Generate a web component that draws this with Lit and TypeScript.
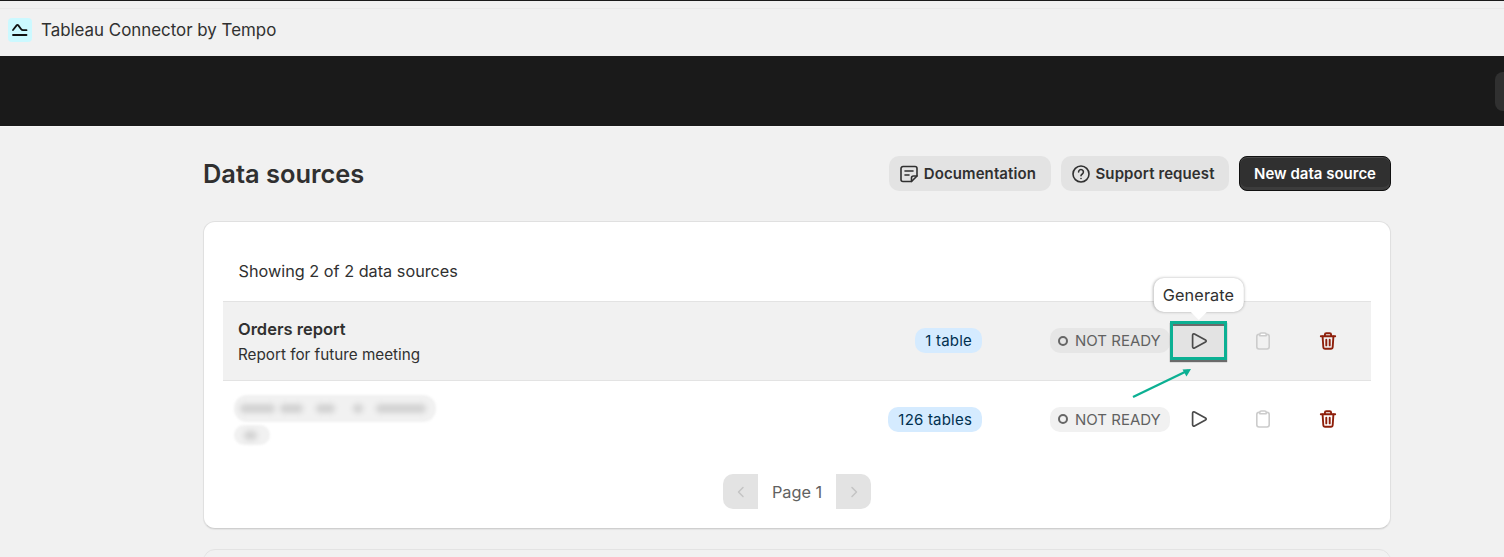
import { LitElement, html, css, svg } from "lit";
import { customElement } from "lit/decorators.js";

const blurBlobs = [
  [35, 5],
  [23, 13],
  [19, 18],
  [10, 13],
  [50, 0],
];

const playIcon = html`<svg width="20" height="20" viewBox="0 0 20 20" fill="none"><path d="M3.6 4.2c0-1 1-1.6 1.9-1.1l11 5.8c.9.5.9 1.7 0 2.2l-11 5.8c-.9.5-1.900-.1-1.900-1.100z" stroke="currentColor" stroke-width="1.7" stroke-linejoin="round"/></svg>`;
const clipIcon = html`<svg width="20" height="20" viewBox="0 0 20 20" fill="none"><rect x="3.800" y="3.400" width="12.400" height="14.600" rx="2.200" stroke="currentColor" stroke-width="1.600"/><path d="M6.800 4.800V3.400c0-.9.700-1.400 1.500-1.400h3.400c.8 0 1.500.5 1.500 1.400v1.400z" fill="#fff" stroke="currentColor" stroke-width="1.500" stroke-linejoin="round"/></svg>`;
const trashIcon = html`<svg width="20" height="20" viewBox="0 0 20 20" fill="none" stroke="currentColor" stroke-width="1.900" stroke-linecap="round" stroke-linejoin="round"><path d="M2.800 5.200h14.400"/><path d="M6.900 5V3.600c0-.8.600-1.400 1.400-1.400h3.400c.8 0 1.400.6 1.400 1.400V5"/><path d="M4.600 5.500l.7 10.500c.1 1 .8 1.800 1.800 1.800h5.800c1 0 1.700-.8 1.800-1.800l.7-10.500"/><path d="M8.300 8.800v5.600M11.700 8.800v5.600"/></svg>`;

@customElement("app-root")
export class AppRoot extends LitElement {
  static styles = css`
    :host {
      display: block;
      height: 557px;
      overflow: hidden;
      background: #f1f1f1;
      font-family: Inter, "Liberation Sans", sans-serif;
      color: #303030;
      position: relative;
    }
    .topbar {
      height: 56px;
      box-sizing: border-box;
      border-top: 1px solid #1a1a1a;
      background: linear-gradient(#f1f1f1 7px, #e9e9e9 7px, #e9e9e9 8px, #f1f1f1 8px);
      display: flex;
      align-items: center;
      gap: 9px;
      padding: 3px 0 0 8px;
    }
    .logo {
      width: 24px;
      height: 24px;
      border-radius: 4px;
      background: #ccf9ff;
      display: flex;
      align-items: center;
      justify-content: center;
    }
    .app-name {
      font-size: 16.900px;
      color: #303030;
    }
    .band {
      height: 71px;
      box-sizing: border-box;
      background: #1a1a1a;
      border-bottom: 1px solid #f7f7f7;
      display: flex;
      align-items: center;
      justify-content: flex-end;
    }
    .band-pill {
      width: 9px;
      height: 39px;
      background: #303030;
      border-radius: 8px 0 0 8px;
    }
    main {
      padding: 29px 113px 0 203px;
    }
    .page-head {
      display: flex;
      align-items: center;
      gap: 10px;
      height: 35px;
      margin-bottom: 30px;
    }
    h1 {
      margin: 0 auto 0 0;
      font-size: 25.400px;
      font-weight: 600;
      color: #303030;
    }
    .btn {
      height: 35px;
      box-sizing: border-box;
      display: flex;
      align-items: center;
      gap: 5px;
      padding: 0 14.500px 0 10px;
      border-radius: 10px;
      background: #e3e3e3;
      font-size: 15px;
      font-weight: 600;
      letter-spacing: 0.1px;
      color: #303030;
    }
    .btn.primary {
      background: #303030;
      color: #fff;
      padding: 0 14px;
      border-radius: 8px;
      border: 1px solid #111;
      letter-spacing: 0;
      box-shadow: inset 0 1px 0 #4a4a4a, inset 0 -3px 0 #3c3c3c;
    }
    .card {
      background: #fff;
      border: 1px solid #e0e0e0;
      border-bottom-color: #cfcfcf;
      border-radius: 12px;
      height: 308px;
      box-sizing: border-box;
      padding: 0 19px;
      box-shadow: 0 1px 1px rgba(0, 0, 0, 0.06);
    }
    .count {
      height: 79px;
      box-sizing: border-box;
      padding: 40px 0 0 15.500px;
      font-size: 16.250px;
      line-height: 18px;
      color: #303030;
    }
    .row {
      box-sizing: border-box;
      display: flex;
      align-items: center;
      padding: 0 15px 1px;
      position: relative;
    }
    .row.active {
      background: #f1f1f1;
      border-top: 1px solid #e3e3e3;
      border-bottom: 1px solid #e3e3e3;
      height: 80px;
    }
    .row.plain {
      height: 78px;
      padding-bottom: 2px;
    }
    .info {
      flex: 1;
      padding-top: 2px;
      font-size: 15.250px;
      line-height: 25px;
    }
    .info strong {
      display: block;
      font-size: 16.500px;
      font-weight: 600;
    }
    .blur {
      display: flex;
      flex-direction: column;
      align-items: flex-start;
      gap: 3px;
      margin: 0 0 0 -4px;
    }
    .blur-line {
      display: flex;
      align-items: center;
      height: 27px;
      width: 202px;
      box-sizing: border-box;
      padding-left: 6px;
      border-radius: 13px;
      background: #f1f1f1;
      filter: blur(1px);
    }
    .blur-line.short {
      width: 36px;
      height: 20px;
      padding-left: 10px;
    }
    .blur-line i {
      display: block;
      height: 9px;
      flex: none;
      border-radius: 5px;
      background: #d2d2d2;
      filter: blur(2.500px);
    }
    .badge {
      font-size: 15px;
      line-height: 25px;
      padding: 0 10px;
      border-radius: 10px;
      background: #d5ebff;
      color: #00304f;
      letter-spacing: 0.2px;
      margin-right: 68px;
    }
    .status {
      display: flex;
      align-items: center;
      gap: 7.500px;
      height: 25px;
      box-sizing: border-box;
      width: 120px;
      padding-left: 7.500px;
      border-radius: 10px;
      background: #e6e6e6;
      color: #616161;
      font-size: 15px;
      white-space: nowrap;
    }
    .row.plain .status {
      background: #f1f1f1;
    }
    .status b {
      width: 10px;
      height: 10px;
      box-sizing: border-box;
      border: 2px solid #666;
      border-radius: 50%;
    }
    .actions {
      display: flex;
      align-items: center;
      gap: 7.500px;
    }
    .action {
      width: 57px;
      height: 39px;
      box-sizing: border-box;
      display: flex;
      align-items: center;
      justify-content: center;
      color: #4a4a4a;
      position: relative;
    }
    .action.current {
      background: #e3e3e3;
      border: 3px solid #0cb093;
      box-shadow: inset 0 2px 0 #6b6b6b, 0 2px 1px #6b6b6b;
    }
    .action.muted {
      color: #cccccc;
    }
    .action.danger {
      color: #8e1f0b;
    }
    .tooltip {
      position: absolute;
      left: 50%;
      bottom: 45px;
      transform: translateX(-50%);
      background: #fff;
      border-radius: 10px;
      height: 34px;
      line-height: 34px;
      padding: 0 9.500px;
      font-size: 16.250px;
      letter-spacing: 0.1px;
      color: #303030;
      box-shadow: 0 0 3px rgba(0, 0, 0, 0.3);
    }
    .tooltip::after {
      content: "";
      position: absolute;
      left: 50%;
      bottom: -5px;
      width: 14px;
      height: 14px;
      background: #fff;
      transform: translateX(-50%) rotate(45deg);
    }
    .arrow {
      position: absolute;
      left: 1128px;
      top: 362px;
    }
    .pager {
      display: flex;
      justify-content: center;
      align-items: center;
      margin-top: 15px;
    }
    .pager button {
      all: unset;
      width: 35px;
      height: 35px;
      background: #e3e3e3;
      display: flex;
      align-items: center;
      justify-content: center;
      color: #c4c4c4;
    }
    .pager button:first-child {
      border-radius: 10px 0 0 10px;
    }
    .pager button:last-child {
      border-radius: 0 10px 10px 0;
    }
    .pager span {
      width: 78px;
      text-align: center;
      font-size: 16.300px;
      color: #616161;
    }
    .next-card {
      margin-top: 20px;
      height: 40px;
      border: 1px solid #e3e3e3;
      border-radius: 12px 12px 0 0;
    }
  `;

  private row(name: unknown, tables: string, active = false) {
    return html`
      <div class="row ${active ? "active" : "plain"}">
        <div class="info">${name}</div>
        <span class="badge">${tables}</span>
        <div class="status"><b></b>NOT READY</div>
        <div class="actions">
          <div class="action ${active ? "current" : ""}">
            ${active ? html`<div class="tooltip">Generate</div>` : ""}
            ${playIcon}
          </div>
          <div class="action muted">${clipIcon}</div>
          <div class="action danger">${trashIcon}</div>
        </div>
      </div>
    `;
  }

  render() {
    return html`
      <div class="topbar">
        <div class="logo">
          <svg width="18" height="18" viewBox="0 0 18 18" fill="none" stroke="#111" stroke-width="1.800" stroke-linecap="round" stroke-linejoin="round">
            <path d="M2 9 5.600 4.400c.5-.6 1.200-.6 1.700 0L10 8c.5.7 1 1.200 2 1.200h3.500"/>
            <path d="M2 14h13.500"/>
          </svg>
        </div>
        <span class="app-name">Tableau Connector by Tempo</span>
      </div>
      <div class="band"><div class="band-pill"></div></div>
      <main>
        <div class="page-head">
          <h1>Data sources</h1>
          <div class="btn">
            <svg width="20" height="20" viewBox="0 0 20 20" fill="none" stroke="currentColor" stroke-width="1.600" stroke-linecap="round" stroke-linejoin="round">
              <path d="M18 12V4.500a2 2 0 0 0-2-2H4a2 2 0 0 0-2 2v11a2 2 0 0 0 2 2h8.500z"/>
              <path d="M6 7h8M6 11h4M12.500 17.500v-3.500a2 2 0 0 1 2-2H18"/>
            </svg>
            Documentation
          </div>
          <div class="btn">
            <svg width="20" height="20" viewBox="0 0 20 20" fill="none" stroke="currentColor" stroke-width="1.600" stroke-linecap="round" stroke-linejoin="round">
              <circle cx="10" cy="10" r="8"/>
              <path d="M7.600 8a2.400 2.400 0 1 1 3.700 2c-.8.5-1.300 1-1.300 1.800"/>
              <path d="M10 14.500v.01"/>
            </svg>
            Support request
          </div>
          <div class="btn primary">New data source</div>
        </div>
        <section class="card">
          <div class="count">Showing 2 of 2 data sources</div>
          ${this.row(html`<strong>Orders report</strong>Report for future meeting`, "1 table", true)}
          ${this.row(
            html`<div class="blur">
              <div class="blur-line">
                ${blurBlobs.map(([w, gap]) => html`<i style="width:${w}px;margin-right:${gap}px"></i>`)}
              </div>
              <div class="blur-line short"><i style="width:13px"></i></div>
            </div>`,
            "126 tables",
          )}
          <div class="pager">
            <button>
              <svg width="16" height="16" viewBox="0 0 16 16" fill="none" stroke="currentColor" stroke-width="1.500" stroke-linecap="round" stroke-linejoin="round"><path d="M10 3.500 5.500 8l4.500 4.500"/></svg>
            </button>
            <span>Page 1</span>
            <button>
              <svg width="16" height="16" viewBox="0 0 16 16" fill="none" stroke="currentColor" stroke-width="1.500" stroke-linecap="round" stroke-linejoin="round"><path d="M6 3.500 10.500 8 6 12.500"/></svg>
            </button>
          </div>
        </section>
        <div class="next-card"></div>
      </main>
      <svg class="arrow" width="70" height="40" viewBox="0 0 70 40" fill="none" stroke="#0cb093" stroke-width="2.400">
        ${svg`<path d="M5 35 60 8.500"/><path d="M54.500 7.500 63 7 58.500 14.500z" fill="#0cb093" stroke="none"/>`}
      </svg>
    `;
  }
}
